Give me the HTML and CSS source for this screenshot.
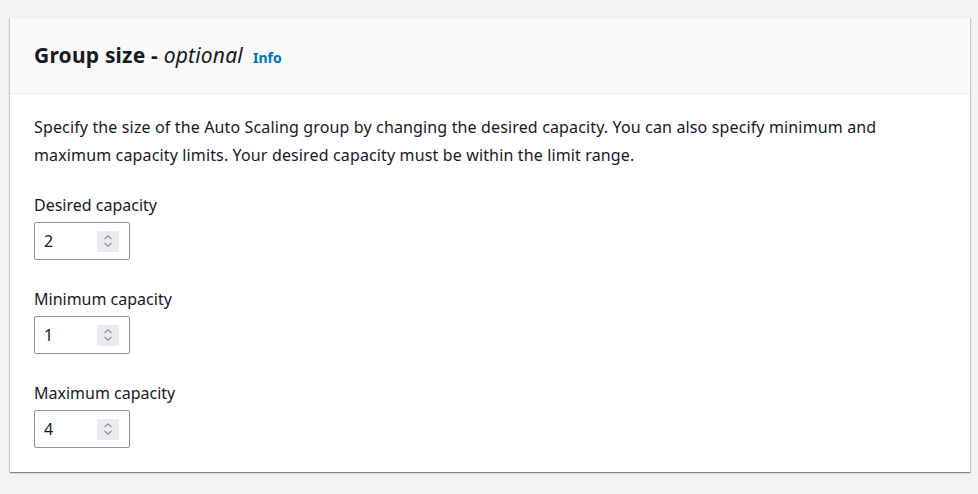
FILE: index.html
```html
<!DOCTYPE html>
<html>
<head>
<meta charset="utf-8">
<link rel="stylesheet" href="styles.css">
</head>
<body>
<div class="page">
  <section class="card">
    <header class="card-header">
      <h2 class="title">Group size - <em>optional</em></h2>
      <a class="info" href="#">Info</a>
    </header>
    <div class="card-body">
      <p class="desc">Specify the size of the Auto Scaling group by changing the desired capacity. You can also specify minimum and maximum capacity limits. Your desired capacity must be within the limit range.</p>
      <div class="field">
        <label class="label">Desired capacity</label>
        <div class="num-input">
          <span class="value">2</span>
          <span class="spin"><svg width="10" height="14" viewBox="0 0 10 14"><path d="M1.5 5 L5 1.8 L8.5 5 M1.5 9 L5 12.2 L8.5 9" fill="none" stroke="#879596" stroke-width="1.2"/></svg></span>
        </div>
      </div>
      <div class="field">
        <label class="label">Minimum capacity</label>
        <div class="num-input">
          <span class="value">1</span>
          <span class="spin"><svg width="10" height="14" viewBox="0 0 10 14"><path d="M1.5 5 L5 1.8 L8.5 5 M1.5 9 L5 12.2 L8.5 9" fill="none" stroke="#879596" stroke-width="1.2"/></svg></span>
        </div>
      </div>
      <div class="field">
        <label class="label">Maximum capacity</label>
        <div class="num-input">
          <span class="value">4</span>
          <span class="spin"><svg width="10" height="14" viewBox="0 0 10 14"><path d="M1.5 5 L5 1.8 L8.5 5 M1.5 9 L5 12.2 L8.5 9" fill="none" stroke="#879596" stroke-width="1.2"/></svg></span>
        </div>
      </div>
    </div>
  </section>
</div>
</body>
</html>
```
FILE: styles.css
```css
html, body {
  margin: 0;
  padding: 0;
  background: #f2f3f3;
}
body {
  font-family: "Noto Sans", "Open Sans", sans-serif;
  color: #16191f;
}
.page {
  padding: 17px 8px 21px 10px;
}
.card {
  background: #fff;
  width: 960px;
  border-top: 1px solid #eaeded;
  box-shadow: 0 1px 1px 0 rgba(0, 28, 36, 0.3), 1px 1px 1px 0 rgba(0, 28, 36, 0.15), -1px 1px 1px 0 rgba(0, 28, 36, 0.15);
}
.card-header {
  background: #fafafa;
  border-bottom: 1px solid #eaeded;
  height: 76px;
  box-sizing: border-box;
  padding: 23px 24px 0 24px;
  display: flex;
  align-items: baseline;
  gap: 10px;
}
.title {
  margin: 0;
  font-size: 21px;
  font-weight: 700;
  line-height: 28px;
  letter-spacing: 0.2px;
}
.title em {
  font-weight: 400;
}
.info {
  font-size: 14px;
  font-weight: 700;
  color: #0073bb;
  text-decoration: none;
}
.card-body {
  padding: 19px 24px 24px 24px;
  display: flex;
  flex-direction: column;
}
.desc {
  margin: 0;
  font-size: 16px;
  line-height: 28px;
  letter-spacing: 0.14px;
  width: 900px;
}
.field {
  display: flex;
  flex-direction: column;
  margin-top: 25px;
}
.field + .field {
  margin-top: 28px;
}
.label {
  font-size: 16px;
  line-height: 22px;
  margin-bottom: 6px;
}
.num-input {
  width: 96px;
  height: 38px;
  box-sizing: border-box;
  border: 1px solid #879596;
  border-radius: 2px;
  display: flex;
  align-items: center;
  padding: 0 10px 0 9px;
  justify-content: space-between;
}
.value {
  font-size: 16px;
}
.spin {
  width: 22px;
  height: 21px;
  background: #eaebee;
  display: flex;
  align-items: center;
  justify-content: center;
}
```
